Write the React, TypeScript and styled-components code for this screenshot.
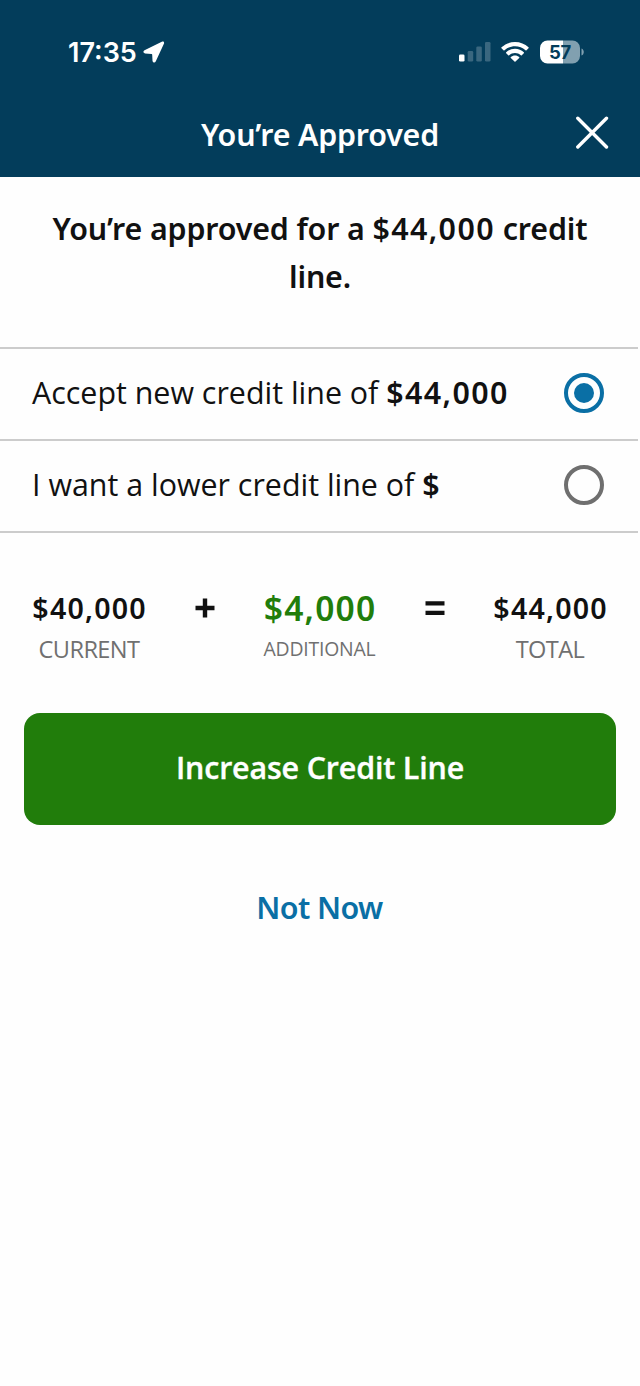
import React from "react";
import styled, { createGlobalStyle } from "styled-components";

const textFont = `"Open Sans", "Noto Sans", sans-serif`;
const boldFont = `"Noto Sans", "Open Sans", sans-serif`;

const GlobalStyle = createGlobalStyle`
  * { box-sizing: border-box; }
  body {
    margin: 0;
    background: #fefefe;
    color: #111;
    font-family: ${textFont};
  }
`;

const Screen = styled.div`
  width: 640px;
  height: 1386px;
  overflow: hidden;
`;

const Header = styled.header`
  height: 177px;
  background: #033d5b;
  color: #fff;
`;

const StatusBar = styled.div`
  height: 89px;
  padding: 15px 56px 0 68px;
  display: flex;
  align-items: center;
  font-family: Inter, sans-serif;
`;

const Clock = styled.span`
  width: 69px;
  font-size: 27px;
  font-weight: 600;
  line-height: 32px;
  white-space: nowrap;
  margin: 1px 6px 0 0;
`;

const StatusIcons = styled.div`
  margin-left: auto;
  display: flex;
  align-items: center;
`;

const WifiIcon = styled.svg`
  margin: 0 11px 0 10px;
`;

const TitleBar = styled.div`
  height: 88px;
  padding: 0 31px;
  display: grid;
  grid-template-columns: 34px 1fr 34px;
  align-items: center;
`;

const Title = styled.h1`
  margin: 3px 0 0;
  text-align: center;
  font-family: ${boldFont};
  font-size: 30.4px;
  font-weight: 600;
  line-height: 42px;
  letter-spacing: -0.2px;
  white-space: nowrap;
`;

const CloseButton = styled.button`
  display: flex;
  padding: 0;
  border: 0;
  background: none;
  color: #fff;
`;

const Figure = styled.b`
  font-family: ${boldFont};
  font-weight: 600;
  letter-spacing: 1.4px;
`;

const Heading = styled.h2`
  margin: 0;
  padding: 28px 40px 0;
  height: 170px;
  text-align: center;
  font-family: ${boldFont};
  font-size: 30.4px;
  font-weight: 600;
  line-height: 48px;
  letter-spacing: -0.15px;
`;

const Options = styled.div`
  width: 638px;
  border-top: 2px solid #ccc;
`;

const Option = styled.label`
  height: 92px;
  padding: 0 34px 2px 32px;
  display: flex;
  align-items: center;
  justify-content: space-between;
  border-bottom: 2px solid #ccc;
`;

const OptionText = styled.span`
  font-size: 30.4px;
  line-height: 44px;
  white-space: nowrap;
`;

const Radio = styled.span<{ $checked?: boolean }>`
  width: 40px;
  height: 40px;
  display: grid;
  place-items: center;
  border: 4px solid ${(p) => (p.$checked ? "#0a6fa5" : "#6f6f6f")};
  border-radius: 50%;
  &::after {
    content: "";
    width: 20px;
    height: 20px;
    border-radius: 50%;
    background: ${(p) => (p.$checked ? "#0a6fa5" : "transparent")};
  }
`;

const Sum = styled.div`
  height: 180px;
  padding: 51px 33px 0 32px;
  display: grid;
  grid-template-columns: 114px 1fr 114px 1fr 114px;
  justify-items: center;
`;

const Term = styled.div`
  display: flex;
  flex-direction: column;
  align-items: center;
`;

const Amount = styled.strong<{ $accent?: boolean }>`
  font-family: ${boldFont};
  font-size: ${(p) => (p.$accent ? 33.6 : 28.6)}px;
  color: ${(p) => (p.$accent ? "#217d0b" : "#111")};
  font-weight: 600;
  line-height: 48px;
  letter-spacing: 1.2px;
  margin-right: -1.2px;
  white-space: nowrap;
`;

const Caption = styled.span<{ $small?: boolean }>`
  font-size: ${(p) => (p.$small ? 19.4 : 23.6)}px;
  line-height: 34px;
  color: #707070;
  letter-spacing: ${(p) => (p.$small ? -0.2 : -0.6)}px;
  white-space: nowrap;
`;

const Operator = styled.svg`
  margin: 14px 0 0 1px;
`;

const PrimaryButton = styled.button`
  display: block;
  width: 592px;
  height: 112px;
  margin: 0 24px;
  padding: 0 0 4px;
  border: 0;
  border-radius: 16px;
  background: #217d0b;
  color: #fff;
  font: 600 30.4px ${textFont};
  letter-spacing: -0.15px;
  -webkit-text-stroke: 0.35px currentColor;
`;

const TextButton = styled.button`
  display: block;
  margin: 62px auto 0;
  padding: 0 1px 0 0;
  border: 0;
  background: none;
  color: #0a6fa5;
  font: 600 30.4px/42px ${boldFont};
  letter-spacing: -0.6px;
`;

export default function App() {
  return (
    <Screen>
      <GlobalStyle />
      <Header>
        <StatusBar>
          <Clock>17:35</Clock>
          <svg width="22" height="22" viewBox="0 0 22 22" fill="#fff">
            <path d="M18.800 .8 1.500 9.300C-.2 10.200.2 12.200 2 12.400l6.600.6c.4 0 .6.300.6.700l.3 6c.1 1.900 2.400 2.400 3.200.8l8.200-17.700C21.600 1.200 20.400.1 18.800.8Z" />
          </svg>
          <StatusIcons>
            <svg width="32" height="20" viewBox="0 0 32 20" fill="#fff">
              <rect x="0" y="12.500" width="5.500" height="7" rx="1.300" />
              <rect x="8.700" y="9" width="5.500" height="10.500" rx="1.300" opacity=".22" />
              <rect x="17.300" y="4.500" width="5.500" height="15" rx="1.300" opacity=".22" />
              <rect x="26" y="0" width="5.500" height="19.500" rx="1.300" opacity=".22" />
            </svg>
            <WifiIcon width="28" height="20" viewBox="0 0 28 20" fill="#fff">
              <path d="M14 0c5.200 0 10 2 13.500 5.300.3.300.3.700 0 1l-2 2c-.3.300-.7.300-1 0C21.700 5.700 18 4.200 14 4.200S6.300 5.700 3.500 8.300c-.3.300-.7.300-1 0l-2-2c-.3-.3-.3-.7 0-1C4 2 8.800 0 14 0Z" />
              <path d="M14 6.800c3.400 0 6.500 1.300 8.800 3.400.3.300.3.700 0 1l-2 2c-.3.300-.7.300-1 0C18.200 11.800 16.200 11 14 11s-4.200.8-5.800 2.200c-.3.300-.7.300-1 0l-2-2c-.3-.3-.3-.7 0-1C7.500 8.100 10.600 6.800 14 6.800Z" />
              <path d="M14 13.500c1.600 0 3.100.6 4.200 1.600.3.300.3.700 0 1l-3.700 3.500c-.3.300-.7.300-1 0l-3.700-3.500c-.3-.3-.3-.7 0-1 1.100-1 2.600-1.600 4.200-1.600Z" />
            </WifiIcon>
            <svg width="44" height="24" viewBox="0 0 44 24">
              <path d="M23 .5h9A7.500 7.500 0 0 1 40 8v8a7.500 7.500 0 0 1-8 7.500h-9Z" fill="#81a0b0" />
              <path d="M8 .5h15v23H8A7.500 7.500 0 0 1 0 16V8A7.500 7.500 0 0 1 8 .5Z" fill="#fff" />
              <path d="M41.500 8.500c3 1 3 6 0 7Z" fill="#81a0b0" />
              <text x="20" y="18.600" textAnchor="middle" fontFamily="Inter, sans-serif" fontSize="18.500" fontWeight="700" letterSpacing="-.3" fill="#033d5b">57</text>
            </svg>
          </StatusIcons>
        </StatusBar>
        <TitleBar>
          <span />
          <Title>You’re Approved</Title>
          <CloseButton aria-label="Close">
            <svg width="34" height="34" viewBox="0 0 34 34" fill="none" stroke="currentColor" strokeWidth="3.400" strokeLinecap="round">
              <path d="M2.800 2.300 31.500 31M31.500 2.300 2.800 31" />
            </svg>
          </CloseButton>
        </TitleBar>
      </Header>
      <Heading>
        You’re approved for a <Figure>$44,000</Figure> credit line.
      </Heading>
      <Options>
        <Option>
          <OptionText>
            Accept new credit line of <Figure>$44,000</Figure>
          </OptionText>
          <Radio $checked />
        </Option>
        <Option>
          <OptionText>
            I want a lower credit line of <Figure>$</Figure>
          </OptionText>
          <Radio />
        </Option>
      </Options>
      <Sum>
        <Term>
          <Amount>$40,000</Amount>
          <Caption>CURRENT</Caption>
        </Term>
        <Operator width="20" height="20" viewBox="0 0 20 20" fill="#111">
          <path d="M7.800.5h4.400v7.300h7.300v4.400h-7.300v7.300H7.800v-7.300H.5V7.800h7.300Z" />
        </Operator>
        <Term>
          <Amount $accent>$4,000</Amount>
          <Caption $small>ADDITIONAL</Caption>
        </Term>
        <Operator width="20" height="20" viewBox="0 0 20 20" fill="#111">
          <path d="M.5 3.200h19v4.200H.5ZM.5 12.800h19V17H.5Z" />
        </Operator>
        <Term>
          <Amount>$44,000</Amount>
          <Caption>TOTAL</Caption>
        </Term>
      </Sum>
      <PrimaryButton>Increase Credit Line</PrimaryButton>
      <TextButton>Not Now</TextButton>
    </Screen>
  );
}
